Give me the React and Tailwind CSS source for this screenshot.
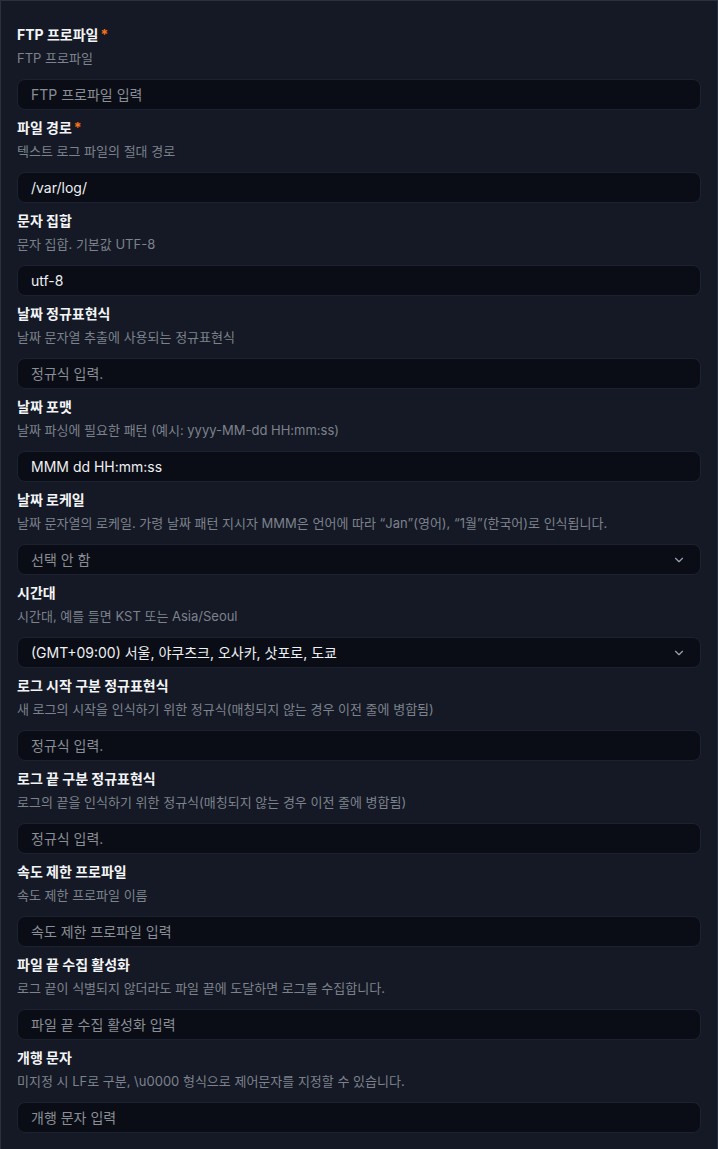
import { ChevronDown } from 'lucide-react';

const fields = [
  { label: 'FTP 프로파일', required: true, desc: 'FTP 프로파일', placeholder: 'FTP 프로파일 입력' },
  { label: '파일 경로', required: true, desc: '텍스트 로그 파일의 절대 경로', value: '/var/log/' },
  { label: '문자 집합', desc: '문자 집합. 기본값 UTF-8', value: 'utf-8' },
  { label: '날짜 정규표현식', desc: '날짜 문자열 추출에 사용되는 정규표현식', placeholder: '정규식 입력.' },
  { label: '날짜 포맷', desc: '날짜 파싱에 필요한 패턴 (예시: yyyy-MM-dd HH:mm:ss)', value: 'MMM dd HH:mm:ss' },
  {
    label: '날짜 로케일',
    desc: '날짜 문자열의 로케일. 가령 날짜 패턴 지시자 MMM은 언어에 따라 “Jan”(영어), “1월”(한국어)로 인식됩니다.',
    select: true,
    placeholder: '선택 안 함',
  },
  {
    label: '시간대',
    desc: '시간대, 예를 들면 KST 또는 Asia/Seoul',
    select: true,
    value: '(GMT+09:00) 서울, 야쿠츠크, 오사카, 삿포로, 도쿄',
  },
  {
    label: '로그 시작 구분 정규표현식',
    desc: '새 로그의 시작을 인식하기 위한 정규식(매칭되지 않는 경우 이전 줄에 병합됨)',
    placeholder: '정규식 입력.',
  },
  {
    label: '로그 끝 구분 정규표현식',
    desc: '로그의 끝을 인식하기 위한 정규식(매칭되지 않는 경우 이전 줄에 병합됨)',
    placeholder: '정규식 입력.',
  },
  { label: '속도 제한 프로파일', desc: '속도 제한 프로파일 이름', placeholder: '속도 제한 프로파일 입력' },
  {
    label: '파일 끝 수집 활성화',
    desc: '로그 끝이 식별되지 않더라도 파일 끝에 도달하면 로그를 수집합니다.',
    placeholder: '파일 끝 수집 활성화 입력',
  },
  {
    label: '개행 문자',
    desc: '미지정 시 LF로 구분, \\u0000 형식으로 제어문자를 지정할 수 있습니다.',
    placeholder: '개행 문자 입력',
  },
];

const Field = ({ field }) => {
  const text = field.value || field.placeholder;
  return (
    <div className="flex flex-col">
      <div className="flex items-center gap-0.5 text-sm leading-5 font-bold text-[#f3f4f6]">
        <span>{field.label}</span>
        {field.required && <span className="text-[#f97316]">*</span>}
      </div>
      <p className="mt-[3px] text-[13px] leading-5 text-[#7d828c]">{field.desc}</p>
      <div className="mt-[11px] flex h-[31px] items-center justify-between rounded-lg border border-[#1d2231] bg-[#0a0d15] pl-[13px] pr-[14px]">
        <span className={`text-sm ${field.value ? 'text-[#eef0f3]' : 'text-[#8a8e96]'}`}>{text}</span>
        {field.select && <ChevronDown className="h-3.5 w-3.5 text-[#9ca3af]" strokeWidth={2} />}
      </div>
    </div>
  );
};

export default function App() {
  return (
    <div
      className="min-h-[1149px] border-x border-t border-[#2a3040] bg-[#141925] px-4 pt-[24px] pb-4"
      style={{ fontFamily: 'Inter, "Noto Sans CJK KR", sans-serif' }}
    >
      <div className="flex flex-col gap-[8px]">
        {fields.map((f) => (
          <Field key={f.label} field={f} />
        ))}
      </div>
    </div>
  );
}
